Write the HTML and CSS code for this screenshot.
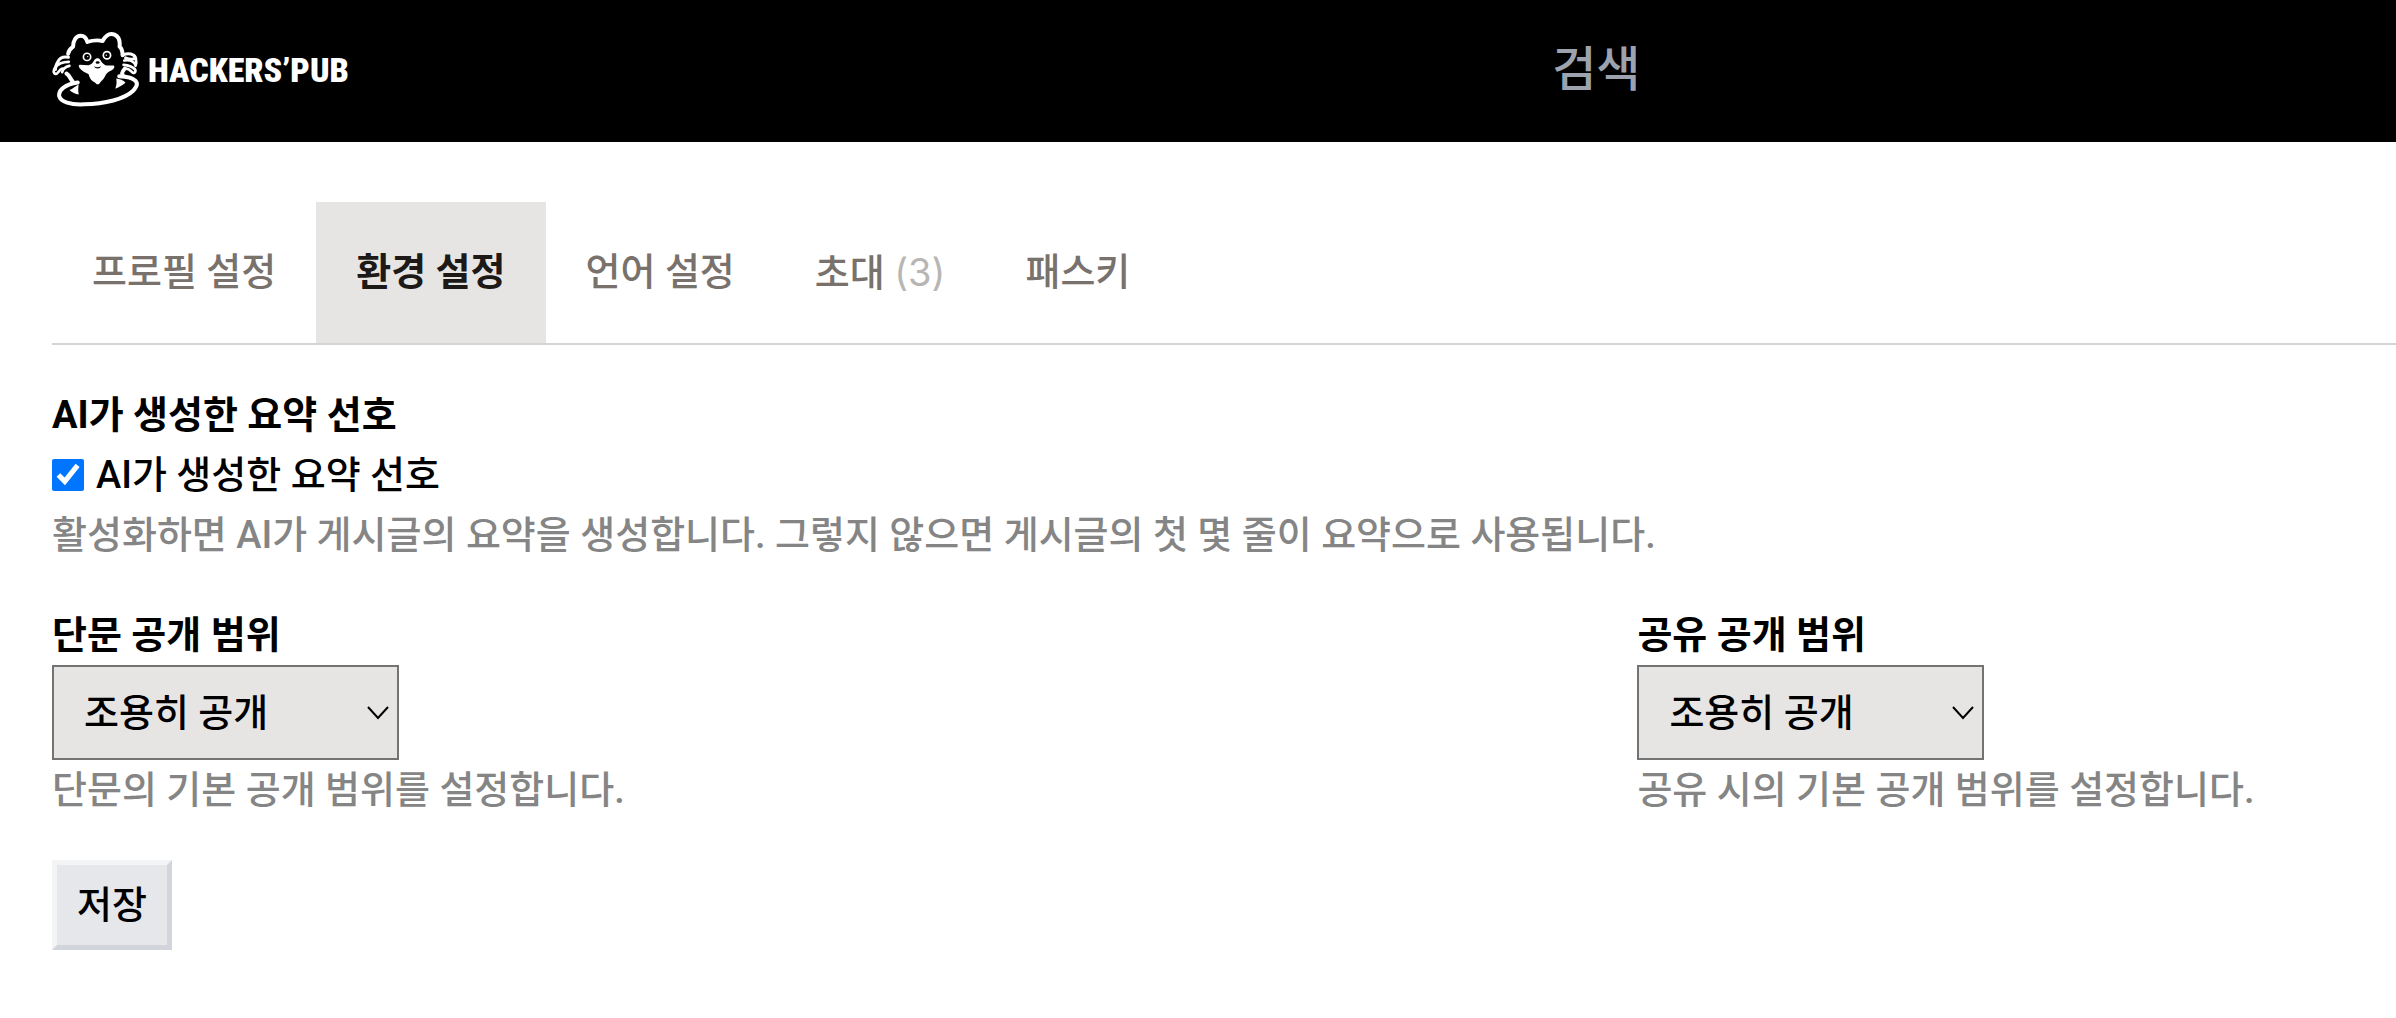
FILE: index.html
```html
<!DOCTYPE html>
<html lang="ko">
<head>
    <meta charset="UTF-8">
    <meta name="viewport" content="width=device-width, initial-scale=1">
    <title>환경 설정</title>
    <link rel="stylesheet" href="styles.css">
</head>
<body>
<header class="header">
    <a class="logo" href="#">
        <svg class="logo-cat" viewBox="36 34 264 232" aria-hidden="true">
            <g fill="none" stroke="#fff" stroke-width="12" stroke-linecap="round" stroke-linejoin="round">
                <!-- tub -->
                <path d="M113 189C76 194 54 212 57 230C61 248 92 257 132 255C195 254 254 239 280 214C303 191 290 172 238 170"/>
                <!-- head -->
                <path d="M100 189C90 180 91 170 79 162M84 103C85 91 91 87 99 81C99 63 108 48 122 48C133 48 139 55 142 67C158 62 174 61 188 64C197 48 209 39 224 45C237 51 241 65 239 81C248 88 248 98 248 107"/>
                <path d="M249 167C244 162 249 154 255 147"/>
                <!-- paws -->
                <path d="M85 113C69 110 58 115 53 127C47 136 45 142 46 150" stroke-width="9"/>
                <path d="M86 127C68 127 54 132 44 145C37 157 42 165 49 163C55 160 57 150 67 147" stroke-width="8"/>
                <path d="M88 139C75 142 68 148 66 158" stroke-width="8"/>
                <path d="M249 106C267 99 282 103 287 114C282 121 269 119 257 115" stroke-width="9"/>
                <path d="M253 123C269 120 281 125 287 136" stroke-width="8"/>
                <path d="M251 136C267 137 278 142 286 150C289 159 282 164 276 157C270 150 263 147 255 147" stroke-width="8"/>
                <path d="M288 116C290 125 290 132 287 139" stroke-width="8"/>
                <!-- eyes -->
                <circle cx="141" cy="112" r="11" stroke-width="5"/>
                <circle cx="201" cy="107" r="11" stroke-width="5"/>
            </g>
            <circle cx="143" cy="111" r="2" fill="#fff"/>
            <circle cx="199" cy="107" r="2" fill="#fff"/>
            <path fill="#fff" d="M119 136L145 137C154 135 159 129 163 121C168 114 178 114 181 121C186 129 193 138 204 138L222 138C225 143 223 149 214 153C202 158 198 164 195 171C189 182 181 187 178 193C174 196 169 195 165 189C156 185 149 178 146 164C137 160 124 154 119 146C115 141 115 137 119 136Z"/>
            <ellipse cx="173" cy="129" rx="6" ry="4"/>
            <path d="M162 140C169 145 177 144 183 140C181 149 166 149 162 140Z"/>
            <path fill="#fff" d="M88 212C98 208 107 199 116 195C114 205 114 215 116 225C106 224 96 220 88 212ZM229 177C239 178 251 182 257 190C248 197 238 204 226 208C230 198 231 188 229 177Z"/>
        </svg>
        <span class="logo-name">HACKERS’PUB</span>
    </a>
    <form class="search" role="search">
        <input class="search-input" type="search" name="q" placeholder="검색" aria-label="검색">
    </form>
</header>
<main class="content">
    <nav class="tabs">
        <a class="tab" href="#">프로필 설정</a>
        <a class="tab active" href="#" aria-current="page">환경 설정</a>
        <a class="tab" href="#">언어 설정</a>
        <a class="tab" href="#">초대 <span class="count">(3)</span></a>
        <a class="tab" href="#">패스키</a>
    </nav>
    <form class="settings">
        <section>
            <h2 class="title">AI가 생성한 요약 선호</h2>
            <div class="check-row">
                <input class="checkbox" type="checkbox" id="preferAiSummary" checked>
                <label for="preferAiSummary">AI가 생성한 요약 선호</label>
            </div>
            <p class="hint">활성화하면 AI가 게시글의 요약을 생성합니다. 그렇지 않으면 게시글의 첫 몇 줄이 요약으로 사용됩니다.</p>
        </section>
        <div class="columns">
            <div>
                <label class="title" for="noteVisibility">단문 공개 범위</label>
                <select class="select" id="noteVisibility">
                    <option>공개</option>
                    <option selected>조용히 공개</option>
                    <option>팔로워만</option>
                </select>
                <p class="hint">단문의 기본 공개 범위를 설정합니다.</p>
            </div>
            <div>
                <label class="title" for="shareVisibility">공유 공개 범위</label>
                <select class="select" id="shareVisibility">
                    <option>공개</option>
                    <option selected>조용히 공개</option>
                    <option>팔로워만</option>
                </select>
                <p class="hint">공유 시의 기본 공개 범위를 설정합니다.</p>
            </div>
        </div>
        <button class="save" type="submit">저장</button>
    </form>
</main>
</body>
</html>
```
FILE: styles.css
```css
* {
    box-sizing: border-box;
}

body {
    margin: 0;
    background: #fff;
    color: #000;
    font-family: Roboto, "Noto Sans CJK KR", sans-serif;
    font-size: 38px;
    font-weight: 500;
    line-height: 60px;
}

input, select, button {
    font: inherit;
    color: inherit;
}

.header {
    display: flex;
    align-items: center;
    justify-content: space-between;
    padding: 31px 0 34px 52px;
    background: #000;
}

.logo {
    display: flex;
    align-items: center;
    gap: 8px;
    color: #fff;
    text-decoration: none;
}

.logo-cat {
    display: block;
    width: 88px;
    height: 77px;
}

.logo-name {
    font-family: "Roboto Condensed", Lato, sans-serif;
    font-size: 34px;
    font-weight: 900;
    line-height: 60px;
}

.search {
    width: 36%;
}

.search-input {
    display: block;
    width: 100%;
    height: 72px;
    padding: 0;
    border: 0;
    outline: 0;
    background: transparent;
    color: #fff;
    font-size: 48px;
}

.search-input::placeholder {
    color: #9ca3af;
    opacity: 1;
}

.content {
    padding: 60px 0 60px 52px;
}

.tabs {
    display: flex;
    border-bottom: 2px solid #d4d4d4;
}

.tab {
    padding: 40px;
    color: #78716c;
    text-decoration: none;
}

.tab.active {
    background: #e7e5e4;
    color: #1c1917;
    font-weight: 700;
}

.count {
    color: #b8b6b4;
    font-family: Inter, sans-serif;
    font-weight: 400;
}

.settings {
    margin-top: 40px;
}

.title {
    display: block;
    margin: 0;
    font-size: 38px;
    font-weight: 700;
}

.check-row {
    display: flex;
    align-items: center;
    gap: 12px;
}

.checkbox {
    width: 32px;
    height: 32px;
    margin: 0;
    accent-color: #0075ff;
}

.hint {
    margin: 0;
    color: #858585;
}

.columns {
    display: grid;
    grid-template-columns: 43fr 21fr;
    gap: 32px;
    margin-top: 40px;
}

.select {
    display: block;
    width: 347px;
    height: 95px;
    padding: 0 60px 0 30px;
    border: 2px solid #737373;
    border-radius: 0;
    appearance: none;
    background: #e7e5e4 url("data:image/svg+xml,%3Csvg xmlns='http://www.w3.org/2000/svg' width='22' height='14'%3E%3Cpath d='M1 1L11 12L21 1' fill='none' stroke='%23000' stroke-width='2'/%3E%3C/svg%3E") no-repeat right 8px center;
}

.save {
    display: block;
    margin-top: 40px;
    padding: 10px 20px;
    border: 5px solid;
    border-color: #f3f4f6 #d1d5db #d1d5db #f3f4f6;
    background: #e5e7eb;
}
```
